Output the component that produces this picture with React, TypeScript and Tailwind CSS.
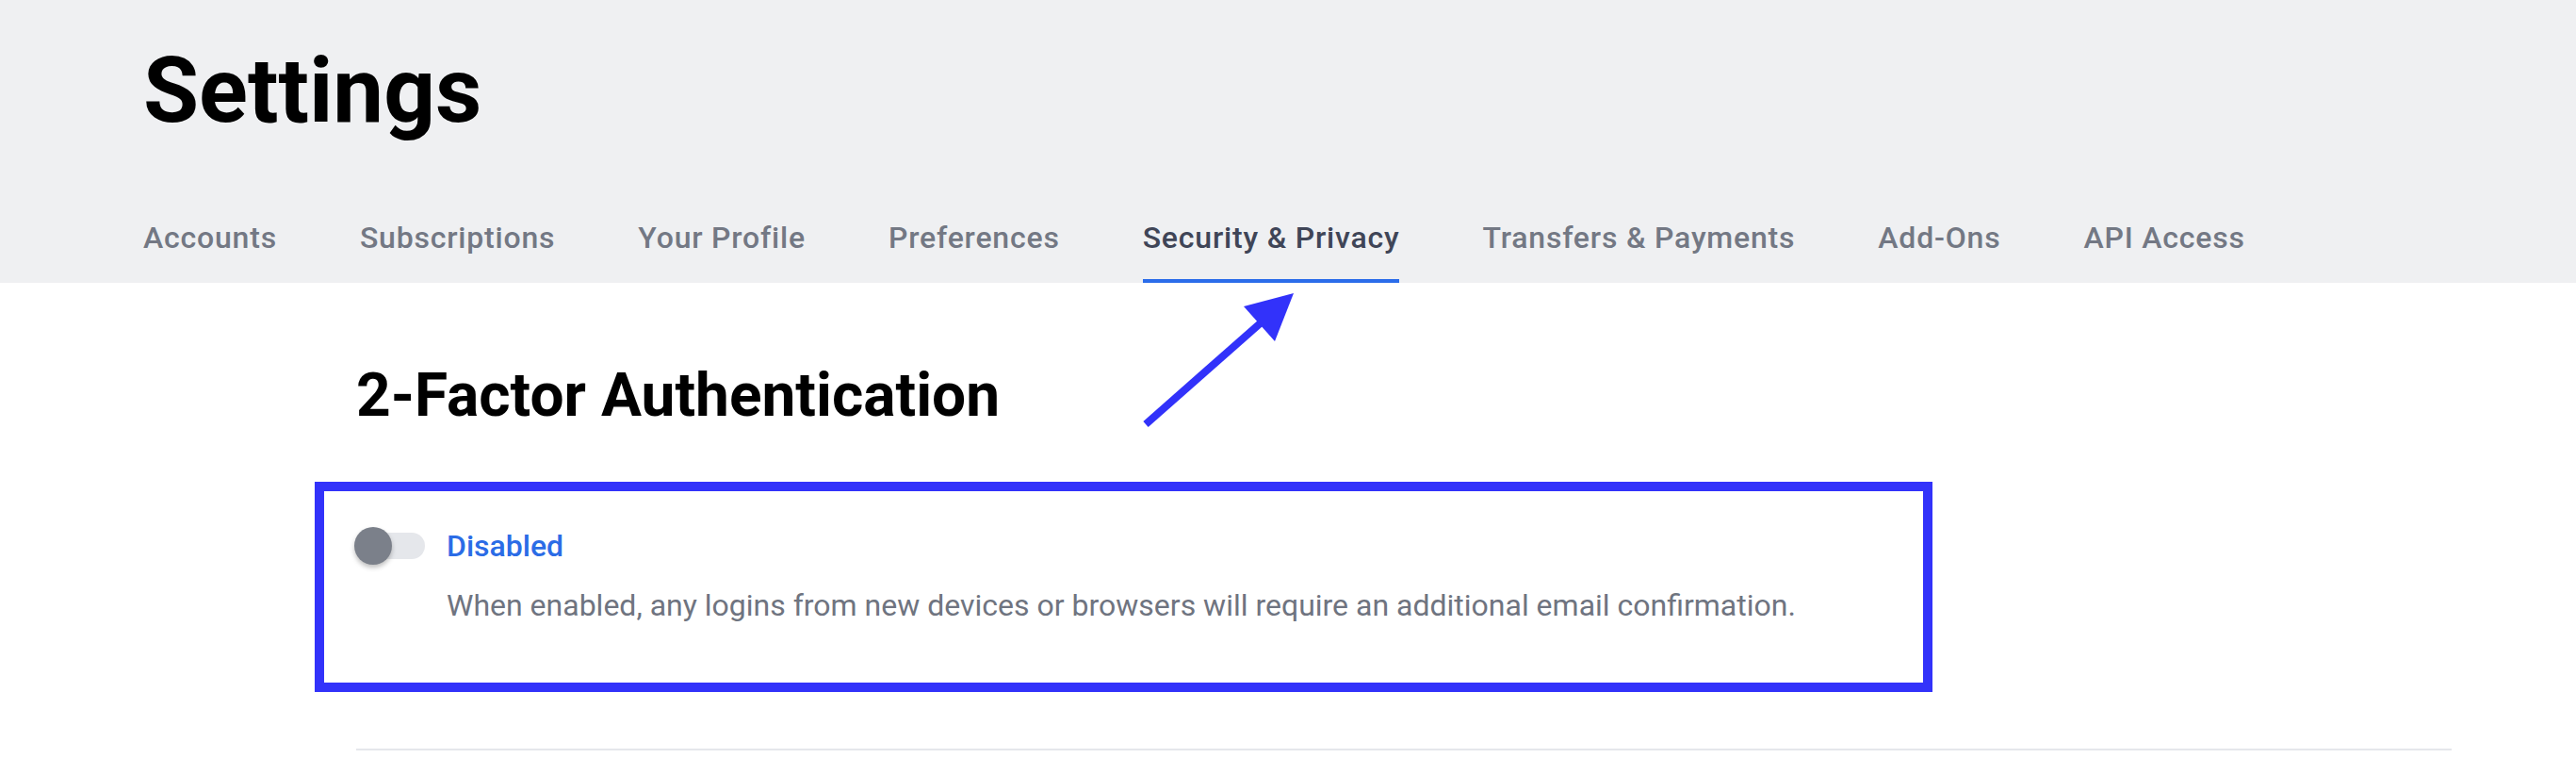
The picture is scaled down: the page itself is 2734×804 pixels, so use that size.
import React from 'react';

const TABS = [
  'Accounts',
  'Subscriptions',
  'Your Profile',
  'Preferences',
  'Security & Privacy',
  'Transfers & Payments',
  'Add-Ons',
  'API Access',
];

function Toggle() {
  return (
    <div className="relative w-[72px] h-[28px] rounded-full bg-[#e5e7eb]">
      <div className="absolute -left-[3px] -top-[6px] w-[40px] h-[40px] rounded-full bg-[#7b808a] shadow-[0_3px_5px_rgba(0,0,0,0.25)]" />
    </div>
  );
}

export default function App() {
  return (
    <div className="relative h-[804px] bg-white font-[family-name:Roboto,sans-serif] overflow-hidden">
      <header className="bg-[#eff0f2] pl-[152px]">
        <h1 className="pt-[48px] text-[96px] leading-none font-bold text-black">Settings</h1>
        <nav className="mt-[84px] flex gap-[88px]">
          {TABS.map((tab) => {
            const active = tab === 'Security & Privacy';
            return (
              <a
                key={tab}
                className={
                  active
                    ? 'text-[32px] leading-[48px] tracking-[0.8px] font-medium text-[#3f4557] pb-[20px] border-b-4 border-[#2b6cea]'
                    : 'text-[32px] leading-[48px] tracking-[0.8px] font-medium text-[#737884] pb-[20px] border-b-4 border-transparent'
                }
              >
                {tab}
              </a>
            );
          })}
        </nav>
      </header>

      <main className="pl-[378px] pr-[132px] pt-[80px]">
        <h2 className="text-[64px] leading-[80px] font-bold text-black">2-Factor Authentication</h2>

        <section className="mt-[95px]">
          <div className="flex items-center gap-[23px] pl-[1px]">
            <Toggle />
            <span className="text-[32px] leading-[48px] font-medium text-[#2b6ce6]">Disabled</span>
          </div>
          <p className="mt-[15px] pl-[96px] text-[32px] leading-[48px] text-[#6f7480]">
            When enabled, any logins from new devices or browsers will require an additional email confirmation.
          </p>
        </section>

        <div className="mt-[128px] h-[2px] bg-[#e5e7eb]" />
      </main>

      {/* annotation overlay */}
      <div className="absolute left-[334px] top-[511px] w-[1717px] h-[223px] border-[10px] border-[#3232fa]" />
      <svg className="absolute left-[1200px] top-[300px]" width="200" height="170" viewBox="0 0 200 170">
        <line x1="16" y1="150" x2="142" y2="39" stroke="#3232fa" strokeWidth="8" />
        <polygon points="173,11 120,25 153,62" fill="#3232fa" />
      </svg>
    </div>
  );
}
